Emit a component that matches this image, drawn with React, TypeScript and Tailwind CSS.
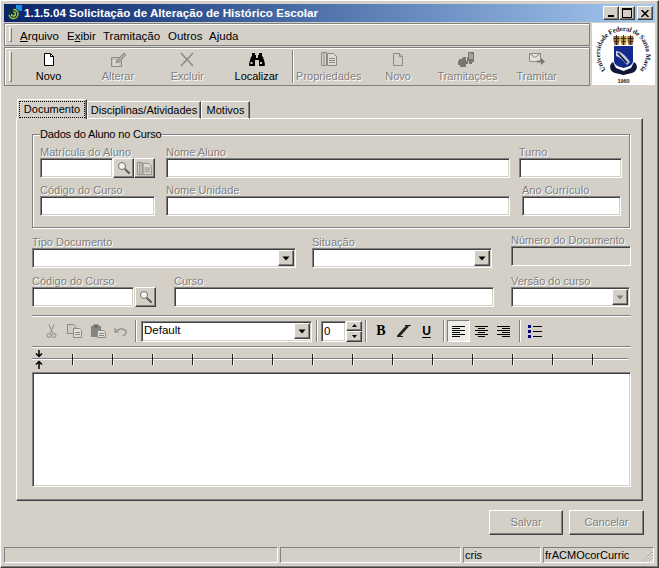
import React from "react";

const sunken = "border border-t-[#808080] border-l-[#808080] border-r-white border-b-white shadow-[inset_1px_1px_0_#404040,inset_-1px_-1px_0_#d4d0c8]";
const raised = "border border-t-white border-l-white border-r-[#404040] border-b-[#404040] shadow-[inset_-1px_-1px_0_#808080,inset_1px_1px_0_#d4d0c8]";
const muted = "text-[#808080] [text-shadow:1px_1px_0_#ffffff]";
const band = "border border-[#808080] shadow-[inset_1px_1px_0_#ffffff]";
const thin = "border border-t-[#808080] border-l-[#808080] border-r-white border-b-white";

function Field({ label, w, children, cls = "" }: { label: string; w: number; children?: React.ReactNode; cls?: string }) {
  return (
    <div className={"flex flex-col shrink-0 " + cls} style={{ width: w }}>
      <span className={"h-[12px] leading-[12px] whitespace-nowrap " + muted}>{label}</span>
      {children ?? <div className={"h-[20px] bg-white " + sunken} />}
    </div>
  );
}

function Lens() {
  return (
    <svg width="14" height="14" viewBox="0 0 14 14" fill="none">
      <circle cx="5" cy="5" r="3.5" fill="#f4f4f0" stroke="#707070" strokeWidth="1" />
      <path d="M7.8 7.8 L12.5 12.5" stroke="#3a3a3a" strokeWidth="1.8" />
      <path d="M8 8 L12 12" stroke="#b8b8b0" strokeWidth="0.5" />
    </svg>
  );
}

function ArrowBtn({ disabled = false }: { disabled?: boolean }) {
  return (
    <div className={"w-[16px] h-[16px] flex items-center justify-center bg-[#d4d0c8] shrink-0 " + raised}>
      <svg width="8" height="5" viewBox="0 0 8 5"><path d="M0.5 0.5H7.5L4 4.5Z" fill={disabled ? "#808080" : "#000000"} /></svg>
    </div>
  );
}

function Combo({ disabled = false }: { disabled?: boolean }) {
  return (
    <div className={"h-[20px] bg-white flex items-center justify-end pr-[1px] " + sunken}>
      <ArrowBtn disabled={disabled} />
    </div>
  );
}

function ToolBtn({ label, off = false, children }: { label: string; off?: boolean; children: React.ReactNode }) {
  return (
    <div className="w-[69.3px] flex flex-col items-center shrink-0">
      <div className="h-[18px] pb-[2px] flex items-center justify-center">{children}</div>
      <span className={"leading-[14px] whitespace-nowrap " + (off ? muted : "text-black")}>{label}</span>
    </div>
  );
}

function Grip() {
  return <div className="w-[3px] h-[calc(100%-6px)] my-auto border border-t-white border-l-white border-r-[#808080] border-b-[#808080] shrink-0" />;
}

function VSep({ h = "h-[22px]" }: { h?: string }) {
  return <div className={"w-[2px] shrink-0 border-l border-l-[#808080] border-r border-r-white " + h} />;
}

const G = "#8a8a86";

function PagesIcon({ size = 18 }: { size?: number }) {
  return (
    <svg width={size} height={size} viewBox="0 0 18 18" fill="none" stroke={G} strokeWidth="1">
      <path d="M1.5 2.5v13M4 2.5v13M6.5 2.5v13" />
      <path d="M1.5 2.5h5M1.5 15.5h5" />
      <path d="M7.5 3.5h6l3 3v9h-9z" fill="#dedbd4" />
      <path d="M9 8.5h6M9 10.5h6M9 12.5h6" />
    </svg>
  );
}

function Logo() {
  return (
    <div className="w-[63px] h-[62px] bg-white shrink-0">
      <svg width="63" height="62" viewBox="0 0 63 62">
        <defs>
          <path id="arc" d="M14 46.500 A 23 23 0 1 1 48 46.500" />
        </defs>
        <text className="font-['Liberation_Serif'] font-bold" fontSize="7" fill="#1a1a30">
          <textPath href="#arc" textLength="106">Universidade Federal de Santa Maria</textPath>
        </text>
        {[24.500, 31.500, 38.500].map((x, i) => (
          <g key={x}>
            <path d={`M${x - 3} 13 h6 v5 l-1 4 h-4 l-1-4z`} fill={i === 1 ? "#b8922f" : "#9a6a30"} />
            <path d={`M${x - 3} 15.500 h6 M${x - 2} 18.500 h4 M${x} 12 v10`} stroke="#2c2018" strokeWidth="0.9" />
          </g>
        ))}
        <path d="M22 23 H41 V38 C41 42 36 44 31.500 45 C27 44 22 42 22 38Z" fill="#14298c" />
        <path d="M24 28 C29 28 33 32 38 39 L35 42 C31 37 28 34 24 33Z" fill="#c8cce4" />
        <path d="M26 30 L35 40" stroke="#10163a" strokeWidth="1.800" />
        <path d="M21 39 C16 42 18 49 23 50 L31.500 52 L40 50 C45 49 47 42 42 39 L39 45 L31.500 48 L24 45Z" fill="#10163a" />
        <text x="31.500" y="59.500" textAnchor="middle" fontSize="5.500" fontWeight="700" fill="#222222" className="font-['Liberation_Sans']">1960</text>
      </svg>
    </div>
  );
}

export default function App() {
  const ticks = Array.from({ length: 14 }, (_, i) => 40 + i * 40);
  const tabOff = "h-[18px] border-t border-l border-t-white border-l-white border-r border-r-[#404040] flex items-center justify-center shadow-[inset_-1px_0_0_#808080] whitespace-nowrap";
  return (
    <div className={"w-[659px] h-[568px] bg-[#d4d0c8] overflow-hidden flex flex-col p-[3px] text-[11px] font-['Liberation_Sans',sans-serif] text-black " + raised}>
      {/* title bar */}
      <div className="h-[18px] shrink-0 flex items-center bg-gradient-to-r from-[#0a246a] to-[#a6caf0] pl-[2px] pr-[2px]">
        <svg width="16" height="16" viewBox="0 0 16 16" className="shrink-0">
          <rect x="10" y="0" width="6" height="6" fill="#1e8ce0" />
          <circle cx="7.5" cy="9" r="6" fill="#103048" />
          <path d="M7.5 4.5a4.5 4.5 0 1 1-4.4 5.4M7.5 7a2 2 0 1 1-2 2" fill="none" stroke="#a8d040" strokeWidth="1.3" />
        </svg>
        <span className="ml-[2px] text-white font-bold text-[11.6px] leading-[18px] whitespace-nowrap">1.1.5.04 Solicitação de Alteração de Histórico Escolar</span>
        <div className="ml-auto flex items-center">
          <div className={"w-[16px] h-[14px] bg-[#d4d0c8] flex items-center justify-center " + raised}>
            <div className="w-[6px] h-[2px] bg-black mt-[6px] -ml-[1px]" />
          </div>
          <div className={"w-[16px] h-[14px] bg-[#d4d0c8] flex items-center justify-center " + raised}>
            <div className="w-[10px] h-[10px] border border-black border-t-2" />
          </div>
          <div className={"w-[16px] h-[14px] bg-[#d4d0c8] ml-[2px] flex items-center justify-center " + raised}>
            <svg width="8" height="7" viewBox="0 0 8 7"><path d="M0.5 0 L7.5 7 M7.5 0 L0.5 7" stroke="#000" strokeWidth="1.5" /></svg>
          </div>
        </div>
      </div>

      {/* menu + toolbar + logo */}
      <div className="flex mt-[1px] shrink-0">
        <div className="w-[587px] flex flex-col">
          <div className={"h-[23px] flex items-stretch pl-[4px] " + band}>
            <Grip />
            <div className="flex ml-[8px] pt-[5px] text-[11.5px] leading-[14px]">
              <span className="w-[47px]"><u>A</u>rquivo</span>
              <span className="w-[36px]">E<u>x</u>ibir</span>
              <span className="w-[65px]">Tramitação</span>
              <span className="w-[41px]">Outros</span>
              <span>A<u>j</u>uda</span>
            </div>
          </div>
          <div className={"h-[39px] mt-[1px] flex items-stretch pl-[4px] " + band}>
            <Grip />
            <div className="flex items-start pt-[3px] ml-[2px]">
              <ToolBtn label="Novo">
                <svg width="12" height="15" viewBox="0 0 12 15" fill="#ffffff" stroke="#000000"><path d="M1.5 1.5h6l3 3v9h-9z" /><path d="M7.5 1.5v3h3" fill="none" /></svg>
              </ToolBtn>
              <ToolBtn label="Alterar" off>
                <svg width="18" height="17" viewBox="0 0 18 17" fill="none" stroke={G}><path d="M2.5 6.5h7l3 3v6h-10z" fill="#c6c3bb" /><path d="M4 10h6M4 12h6M4 14h6" stroke="#f0eee8" /><path d="M8 9l7-7 2 2-7 7-3 1z" fill="#a8a8a4" /></svg>
              </ToolBtn>
              <ToolBtn label="Excluir" off>
                <svg width="16" height="15" viewBox="0 0 16 15" fill="none" stroke={G} strokeWidth="1.6"><path d="M2 1 L14 14 M14 1 L2 14" /></svg>
              </ToolBtn>
              <ToolBtn label="Localizar">
                <svg width="16" height="15" viewBox="0 0 16 15" fill="#000000"><path d="M3 1h3v2h1v3h2V3h1V1h3v3l1 1 1.800 6v3H10V8H6v6H.2v-3L2 5l1-1z" /><rect x="1.500" y="10" width="2" height="2" fill="#d4d0c8" /><rect x="11" y="10" width="2" height="2" fill="#d4d0c8" /></svg>
              </ToolBtn>
            </div>
            <div className="flex items-center ml-[1px]"><VSep h="h-[33px]" /></div>
            <div className="flex items-start pt-[3px]">
              <ToolBtn label="Propriedades" off><PagesIcon /></ToolBtn>
              <ToolBtn label="Novo" off>
                <svg width="12" height="15" viewBox="0 0 12 15" fill="none" stroke={G}><path d="M1.500 1.500h6l3 3v9h-9z" /><path d="M7.500 1.500v3h3" /></svg>
              </ToolBtn>
              <ToolBtn label="Tramitações" off>
                <svg width="18" height="17" viewBox="0 0 18 17" fill="#767672"><path d="M10 1h6v10h-2v2h-3v-3H9V6h1z" /><path d="M1 8h3l1-2h3v4h2v3H8v3H2v-2H0v-4h1z" /><path d="M12 2v6M14 3v5" stroke="#d4d0c8" /></svg>
              </ToolBtn>
              <ToolBtn label="Tramitar" off>
                <svg width="18" height="15" viewBox="0 0 18 15" fill="none" stroke={G}><path d="M1.500 1.500h11v8h-11z" fill="#e4e2dc" /><path d="M1.500 1.500l5.500 4 5.500-4" /><path d="M9 8.500h4V6l4 3.500-4 3.500v-2.500H9z" fill="#777772" stroke="none" /></svg>
              </ToolBtn>
            </div>
          </div>
        </div>
        <div className="ml-[2px]"><Logo /></div>
      </div>

      {/* tabs */}
      <div className="flex items-end ml-[13px] mt-[13px] h-[20px] shrink-0 relative z-10 -mb-px">
        <div className="h-[20px] w-[70px] bg-[#d4d0c8] border-t border-l border-t-white border-l-white border-r border-r-[#404040] flex items-start pt-[1px] justify-center px-[1px] shadow-[inset_-1px_0_0_#808080]">
          <span className="border border-dotted border-black leading-[15px] h-[17px] w-full text-center whitespace-nowrap">Documento</span>
        </div>
        <div className={"w-[114px] border-b border-b-white " + tabOff}>Disciplinas/Atividades</div>
        <div className={"w-[49px] border-b border-b-white " + tabOff}>Motivos</div>
      </div>

      {/* panel */}
      <div className={"ml-[12px] w-[627px] h-[383px] shrink-0 pl-[15px] pt-[15px] " + raised}>
        <div className="relative w-[598px] h-[94px] border border-[#808080] shadow-[inset_1px_1px_0_#ffffff,1px_1px_0_#ffffff] pl-[7px] pt-[11px]">
          <span className="absolute left-[7px] -top-[7px] bg-[#d4d0c8] leading-[13px] pr-[1px] whitespace-nowrap tracking-[-0.17px]">Dados do Aluno no Curso</span>
          <div className="flex">
            <Field label="Matrícula do Aluno" w={115}>
              <div className="flex h-[20px]">
                <div className={"w-[73px] bg-white " + sunken} />
                <div className={"w-[21px] flex items-center justify-center " + raised}><Lens /></div>
                <div className={"w-[21px] flex items-center justify-center " + raised}><PagesIcon size={17} /></div>
              </div>
            </Field>
            <Field label="Nome Aluno" w={344} cls="ml-[11px]" />
            <Field label="Turno" w={103} cls="ml-[9px]" />
          </div>
          <div className="flex mt-[6px]">
            <Field label="Código do Curso" w={115} />
            <Field label="Nome Unidade" w={344} cls="ml-[11px]" />
            <Field label="Ano Currículo" w={99} cls="ml-[12px]" />
          </div>
        </div>

        <div className="flex items-start mt-[8px]">
          <Field label="Tipo Documento" w={264}><Combo /></Field>
          <Field label="Situação" w={180} cls="ml-[16px]"><Combo /></Field>
          <Field label="Número do Documento" w={120} cls="ml-[19px] -mt-[2px]">
            <div className={"h-[20px] bg-[#d4d0c8] " + sunken} />
          </Field>
        </div>
        <div className="flex items-start mt-[7px]">
          <Field label="Código do Curso" w={124}>
            <div className="flex h-[20px]">
              <div className={"w-[102px] bg-white " + sunken} />
              <div className={"w-[21px] ml-[1px] flex items-center justify-center " + raised}><Lens /></div>
            </div>
          </Field>
          <Field label="Curso" w={320} cls="ml-[18px]" />
          <Field label="Versão do curso" w={119} cls="ml-[17px]"><Combo disabled /></Field>
        </div>

        <div className="w-[599px] h-[2px] mt-[8px] border-t border-t-[#808080] border-b border-b-white" />

        {/* editor toolbar */}
        <div className="w-[599px] h-[29px] pt-[3px]">
          <div className="flex items-center h-[22px]">
            <div className="flex items-center ml-[8px] w-[92px]">
              <span className="w-[23px] flex justify-center">
                <svg width="11" height="15" viewBox="0 0 11 15" fill="none" stroke={G}><path d="M3 0.500 L6.500 9 M8 0.500 L4.500 9" /><circle cx="3" cy="11.500" r="2" /><circle cx="8" cy="11.500" r="2" /></svg>
              </span>
              <span className="w-[23px] flex justify-center">
                <svg width="15" height="14" viewBox="0 0 15 14" fill="#cfccc4" stroke={G}><path d="M0.500 0.500h6l2 2v7h-8z" /><path d="M6.500 4.500h6l2 2v7h-8z" fill="#e0ded8" /><path d="M8 8.500h5M8 10.500h5" /></svg>
              </span>
              <span className="w-[23px] flex justify-center">
                <svg width="16" height="14" viewBox="0 0 16 14"><path d="M1 2h10v11H1z" fill="#848480" /><rect x="3.500" y="0.500" width="5" height="3" fill="#6c6c68" /><path d="M7.500 6.500h6l2 2v5h-8z" fill="#e0ded8" stroke={G} /><path d="M9 9.500h5M9 11.500h5" stroke={G} /></svg>
              </span>
              <span className="w-[23px] flex justify-center">
                <svg width="13" height="9" viewBox="0 0 13 9" fill="none" stroke={G} strokeWidth="1.200"><path d="M1 1v4h4" /><path d="M1.500 5 C4 1.500 9 0.500 12 4 C12.500 6 11 8 9 8.500" /></svg>
              </span>
            </div>
            <div className="ml-[3px] mr-[4px]"><VSep /></div>
            <div className={"w-[171px] h-[21px] bg-white flex items-center justify-between pl-[2px] pr-[1px] text-[11.5px] " + sunken}>
              <span>Default</span>
              <ArrowBtn />
            </div>
            <div className="ml-[4px] mr-[3px]"><VSep /></div>
            <div className={"w-[25px] h-[21px] bg-white pl-[2px] leading-[19px] text-[11.5px] " + sunken}>0</div>
            <div className="flex flex-col w-[16px] h-[21px]">
              <div className={"h-[10.500px] flex items-center justify-center " + raised}><svg width="5" height="3" viewBox="0 0 5 3"><path d="M2.500 0L5 3H0Z" /></svg></div>
              <div className={"h-[10.500px] flex items-center justify-center " + raised}><svg width="5" height="3" viewBox="0 0 5 3"><path d="M0 0H5L2.500 3Z" /></svg></div>
            </div>
            <div className="ml-[3px] mr-[3px]"><VSep /></div>
            <span className="w-[22px] text-center font-bold font-['Liberation_Serif'] text-[14px] leading-[16px]">B</span>
            <span className="w-[23px] flex justify-center">
              <svg width="14" height="12" viewBox="0 0 14 12"><path d="M1 11.500 L11 0.500" stroke="#222" strokeWidth="2.800" /><path d="M0 11.500h6M8 0.500h6" stroke="#222" strokeWidth="1" /></svg>
            </span>
            <span className="w-[23px] text-center font-bold text-[12px] underline underline-offset-2">U</span>
            <div className="ml-[5px] mr-[2px]"><VSep /></div>
            <div className="w-[23px] h-[22px] flex items-center justify-center bg-[#eeece8] border border-t-[#808080] border-l-[#808080] border-r-white border-b-white">
              <svg width="13" height="11" viewBox="0 0 13 11" stroke="#000"><path d="M0 0.500h13M0 2.500h8M0 4.500h13M0 6.500h8M0 8.500h13M0 10.500h8" /></svg>
            </div>
            <span className="w-[22px] flex justify-center">
              <svg width="13" height="11" viewBox="0 0 13 11" stroke="#000"><path d="M0 0.500h13M3 2.500h7M0 4.500h13M3 6.500h7M0 8.500h13M3 10.500h7" /></svg>
            </span>
            <span className="w-[22px] flex justify-center">
              <svg width="13" height="11" viewBox="0 0 13 11" stroke="#000"><path d="M0 0.500h13M5 2.500h8M0 4.500h13M5 6.500h8M0 8.500h13M5 10.500h8" /></svg>
            </span>
            <div className="ml-[5px] mr-[7px]"><VSep /></div>
            <svg width="14" height="13" viewBox="0 0 14 13"><path d="M0 0h3v3H0zM0 5h3v3H0zM0 10h3v3H0z" fill="#000080" /><path d="M5 1.500h9M5 6.500h9M5 11.500h9" stroke="#000" /></svg>
          </div>
        </div>
        <div className="w-[599px] h-[2px] border-t border-t-[#808080] border-b border-b-white" />

        {/* ruler */}
        <svg width="599" height="24" viewBox="0 0 599 24" className="block">
          <path d="M0 10.500H596" stroke="#808080" />
          <path d="M0 11.500H596" stroke="#ffffff" />
          {ticks.map((x) => (
            <g key={x}>
              <path d={`M${x + 0.5} 6V17`} stroke="#202020" />
              <path d={`M${x + 1.5} 6V9M${x + 1.5} 13V17`} stroke="#ffffff" />
            </g>
          ))}
          <path d="M7 2v6M4 5.500l3 3 3-3" fill="none" stroke="#000" strokeWidth="1.500" />
          <path d="M7 21v-6M4 16.500l3-3 3 3" fill="none" stroke="#000" strokeWidth="1.500" />
        </svg>

        <div className={"w-[599px] h-[115px] bg-white " + sunken} />
      </div>

      {/* action buttons */}
      <div className="flex justify-end gap-[6px] mt-[9px] pr-[11px] shrink-0">
        <div className={"w-[74px] h-[25px] flex items-center justify-center " + raised + " " + muted}>Salvar</div>
        <div className={"w-[75px] h-[25px] flex items-center justify-center " + raised + " " + muted}>Cancelar</div>
      </div>

      {/* status bar */}
      <div className="flex gap-[2px] mt-auto h-[16px] mb-[1px] shrink-0">
        <div className={"w-[274px] " + thin} />
        <div className={"w-[181px] " + thin} />
        <div className={"w-[78px] pl-[1px] leading-[15px] " + thin}>cris</div>
        <div className={"relative w-[111px] pl-[1px] leading-[15px] whitespace-nowrap " + thin}>
          frACMOcorCurric
          <svg width="11" height="11" viewBox="0 0 11 11" className="absolute right-0 bottom-0" fill="none">
            <path d="M10.500 1 L1 10.500 M10.500 4 L4 10.500 M10.500 7 L7 10.500" stroke="#808080" />
            <path d="M10.500 2 L2 10.500 M10.500 5 L5 10.500 M10.500 8 L8 10.500" stroke="#ffffff" />
          </svg>
        </div>
      </div>
    </div>
  );
}
